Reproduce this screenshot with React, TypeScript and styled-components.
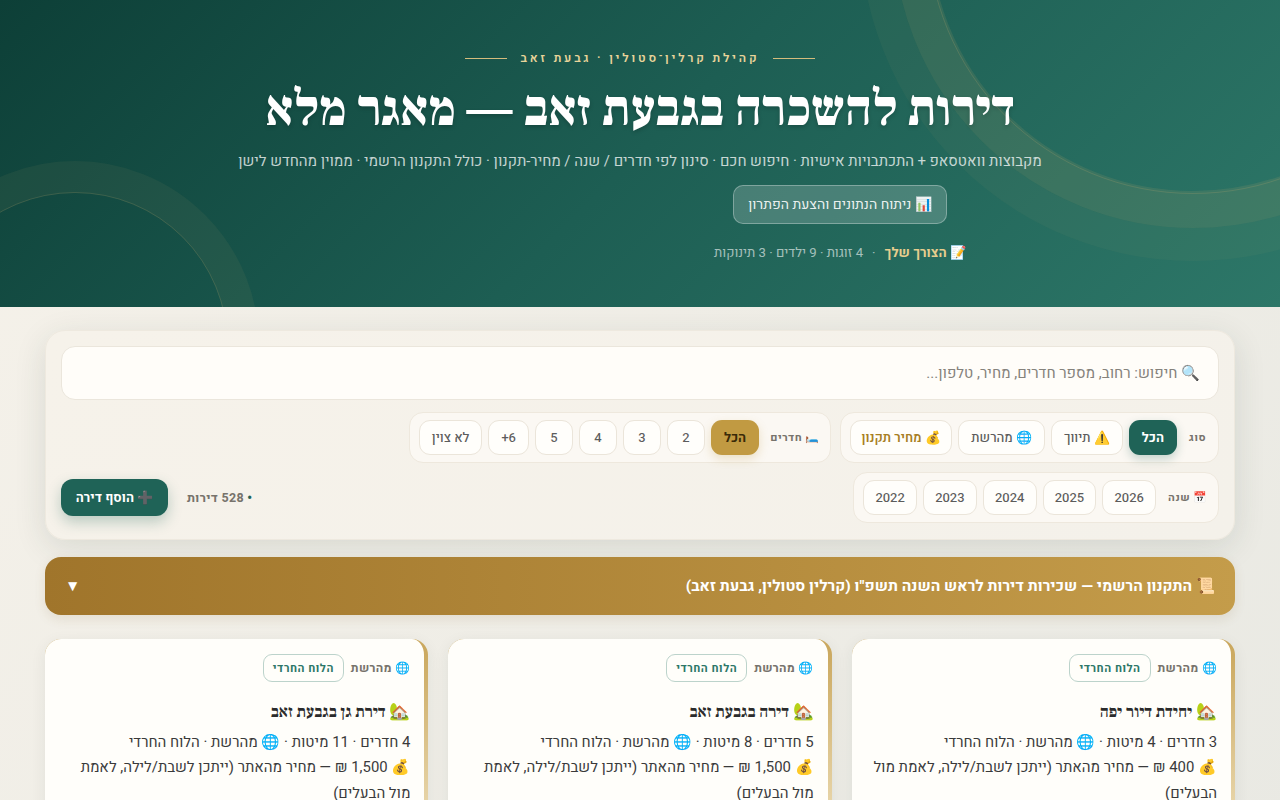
import React from "react";
import styled, { createGlobalStyle } from "styled-components";

const GlobalStyle = createGlobalStyle`
  * { box-sizing: border-box; }
  html, body { margin: 0; padding: 0; }
  body {
    direction: rtl;
    font-family: Heebo, Roboto, "Open Sans", sans-serif;
    background: linear-gradient(135deg, #f6f2ea 0%, #e9e9e3 100%);
    color: #3a3a3a;
    overflow-x: hidden;
  }
`;

const Hero = styled.header`
  position: relative;
  overflow: hidden;
  height: 307px;
  padding-top: 50px;
  text-align: center;
  background: linear-gradient(135deg, #0d3f37 0%, #1d5e53 50%, #2d7768 100%);
`;

const Ring = styled.div<{ $size: number; $top: number; $left: number; $width: number; $alpha: number }>`
  position: absolute;
  width: ${(p) => p.$size}px;
  height: ${(p) => p.$size}px;
  top: ${(p) => p.$top}px;
  left: ${(p) => p.$left}px;
  border-radius: 50%;
  border: ${(p) => p.$width}px solid rgba(200, 170, 110, ${(p) => p.$alpha});
`;

const HeroInner = styled.div`
  position: relative;
`;

const Eyebrow = styled.div`
  display: flex;
  align-items: center;
  justify-content: center;
  gap: 14px;
  height: 16px;
  font-size: 12px;
  font-weight: 600;
  letter-spacing: 2.8px;
  color: #e8d49a;
  &::before,
  &::after {
    content: "";
    width: 42px;
    height: 1px;
    background: #d4bc7c;
  }
`;

const Title = styled.h1`
  margin: 15px 0 0;
  font-family: "Frank Ruhl Libre", "Liberation Serif", serif;
  font-size: 50px;
  line-height: 58px;
  font-weight: 900;
  color: #fff;
  text-shadow: 0 2px 4px rgba(0, 0, 0, 0.2);
`;

const Subtitle = styled.p`
  margin: 12px 0 0;
  font-size: 14.9px;
  line-height: 20px;
  color: rgba(255, 255, 255, 0.75);
`;

/* the button and the note sit to the left of the page centre in the reference */
const HeroActions = styled.div`
  padding-left: 400px;
`;

const HeroButton = styled.button`
  display: block;
  margin: 14px auto 0;
  height: 39px;
  padding: 0 14px;
  border-radius: 10px;
  border: 1px solid rgba(255, 255, 255, 0.3);
  background: rgba(255, 255, 255, 0.18);
  color: rgba(255, 255, 255, 0.9);
  font-family: inherit;
  font-size: 14px;
`;

const Need = styled.div`
  display: flex;
  align-items: center;
  justify-content: center;
  gap: 9px;
  margin-top: 19px;
  font-size: 13.2px;
  line-height: 20px;
  color: rgba(255, 255, 255, 0.6);
`;

const NeedLabel = styled.strong`
  color: #e6cd8e;
`;

const Main = styled.main`
  padding: 23px 45px 40px;
`;

const Panel = styled.section`
  padding: 15px 15px 16px;
  display: flex;
  flex-direction: column;
  gap: 9px;
  border-radius: 20px;
  border: 1px solid #eee9df;
  background: linear-gradient(135deg, #f6f2ea, #f4f1ea);
  box-shadow: 0 8px 32px rgba(31, 60, 50, 0.12);
`;

const SearchBox = styled.div`
  height: 54px;
  flex: none;
  margin-bottom: 3px;
  display: flex;
  align-items: center;
  padding: 0 19px 0 16px;
  border-radius: 14px;
  border: 1px solid #ebe6dc;
  background: #fffdf9;
`;

const SearchInput = styled.input`
  width: 100%;
  border: 0;
  outline: 0;
  padding: 0;
  margin-right: -1px;
  background: transparent;
  font-family: inherit;
  font-size: 15px;
  direction: rtl;
  &::placeholder {
    color: #85827c;
    opacity: 1;
  }
`;

const FilterRow = styled.div`
  display: flex;
  align-items: center;
  gap: 9px;
`;

const Group = styled.div<{ $padRight?: number }>`
  height: 51px;
  display: flex;
  align-items: center;
  gap: 6px;
  padding: 0 ${(p) => p.$padRight ?? 12}px 0 9px;
  border-radius: 14px;
  border: 1px solid #eee8dd;
  background: #fbf8f3;
`;

const GroupLabel = styled.span<{ $gap?: number }>`
  margin-left: ${(p) => p.$gap ?? 6}px;
  font-size: 11px;
  font-weight: 700;
  letter-spacing: 0.5px;
  color: #77736c;
`;

const Chip = styled.button<{ $active?: "green" | "gold"; $gold?: boolean }>`
  height: 35px;
  min-width: 38px;
  padding: 0 ${(p) => (p.$gold ? 10.5 : 12)}px;
  border-radius: 11px;
  font-family: inherit;
  font-size: 13px;
  font-weight: ${(p) => (p.$active ? 700 : p.$gold ? 600 : 500)};
  border: 1px solid ${(p) => (p.$active ? "transparent" : "#ebe5da")};
  background: ${(p) =>
    p.$active === "green" ? "#1f6357" : p.$active === "gold" ? "#c19a42" : "#fffefb"};
  color: ${(p) =>
    p.$active === "green" ? "#fff" : p.$active === "gold" ? "#3a2a08" : p.$gold ? "#a87f24" : "#5c5c5c"};
  box-shadow: ${(p) =>
    p.$active === "green"
      ? "0 4px 10px rgba(31, 99, 87, 0.25)"
      : p.$active === "gold"
      ? "0 4px 10px rgba(193, 154, 66, 0.25)"
      : "none"};
`;

const YearChip = styled(Chip)`
  padding: 0 11.2px;
`;

const Count = styled.span`
  margin-right: auto;
  margin-left: 10px;
  font-size: 12.5px;
  font-weight: 700;
  color: #77736c;
  letter-spacing: 0.3px;
  b {
    color: #1f6357;
  }
`;

const AddButton = styled.button`
  height: 37px;
  width: 107px;
  padding: 0;
  border: 0;
  border-radius: 12px;
  background: #1f6357;
  color: #fff;
  font-family: inherit;
  font-size: 13px;
  font-weight: 700;
  box-shadow: 0 6px 14px rgba(31, 99, 87, 0.28);
`;

const Accordion = styled.div`
  height: 58px;
  margin-top: 17px;
  display: flex;
  align-items: center;
  justify-content: space-between;
  padding: 0 20px;
  border-radius: 16px;
  background: linear-gradient(270deg, #c49c4a 0%, #a0752b 100%);
  box-shadow: 0 4px 12px rgba(120, 90, 30, 0.12);
  color: #fff;
  font-size: 15.45px;
  font-weight: 700;
`;

const CardGrid = styled.div`
  margin-top: 24px;
  display: grid;
  grid-template-columns: repeat(3, 1fr);
  gap: 20px;
`;

const Card = styled.article`
  padding: 15px 14px 16px 16px;
  border-radius: 16px;
  border-right: 4px solid transparent;
  background: linear-gradient(#fffefa, #fffefa) padding-box,
    linear-gradient(180deg, #c9a65b, #ead9b0) border-box;
  box-shadow: 0 4px 16px rgba(30, 60, 50, 0.07);
`;

const CardMeta = styled.div`
  display: flex;
  align-items: center;
  gap: 7px;
  height: 28px;
`;

const Source = styled.span`
  font-size: 12px;
  font-weight: 700;
  letter-spacing: 0.3px;
  color: #77736c;
`;

const Badge = styled.span`
  display: inline-flex;
  align-items: center;
  height: 28px;
  padding: 0 9px;
  border-radius: 9px;
  border: 1px solid #bcd3cb;
  font-size: 11.2px;
  font-weight: 700;
  letter-spacing: 0.5px;
  color: #2d7768;
`;

const CardTitle = styled.h3`
  margin: 17px 0 4.5px;
  font-family: "Frank Ruhl Libre", "Liberation Serif", serif;
  font-size: 16.8px;
  line-height: 26px;
  font-weight: 700;
  color: #2b2b2b;
`;

const CardLine = styled.p`
  margin: 0;
  font-size: 14.9px;
  line-height: 25.5px;
  color: #3a3a3a;
`;

const typeChips = [
  { label: "הכל", active: "green" as const },
  { label: "⚠️ תיווך" },
  { label: "🌐 מהרשת" },
  { label: "💰 מחיר תקנון", gold: true },
];

const roomChips = ["2", "3", "4", "5", "6+", "לא צוין"];
const yearChips = ["2026", "2025", "2024", "2023", "2022"];

const cards = [
  { title: "יחידת דיור יפה", rooms: "3 חדרים · 4 מיטות", price: "400" },
  { title: "דירה בגבעת זאב", rooms: "5 חדרים · 8 מיטות", price: "1,500" },
  { title: "דירת גן בגבעת זאב", rooms: "4 חדרים · 11 מיטות", price: "1,500" },
];

export default function App() {
  return (
    <div lang="he" dir="rtl">
      <GlobalStyle />
      <Hero>
        <Ring $size={666} $top={-405} $left={860} $width={33} $alpha={0.05} />
        <Ring $size={600} $top={-372} $left={893} $width={37} $alpha={0.13} />
        <Ring $size={532} $top={-338} $left={927} $width={1} $alpha={0.2} />
        <Ring $size={368} $top={161} $left={-109} $width={32} $alpha={0.07} />
        <Ring $size={306} $top={192} $left={-78} $width={1} $alpha={0.18} />
        <HeroInner>
          <Eyebrow>קהילת קרלין־סטולין · גבעת זאב</Eyebrow>
          <Title>דירות להשכרה בגבעת זאב — מאגר מלא</Title>
          <Subtitle>
            מקבוצות וואטסאפ + התכתבויות אישיות · חיפוש חכם · סינון לפי חדרים / שנה / מחיר-תקנון · כולל התקנון הרשמי · ממוין מהחדש לישן
          </Subtitle>
          <HeroActions>
            <HeroButton>📊 ניתוח הנתונים והצעת הפתרון</HeroButton>
            <Need>
              <NeedLabel>📝 הצורך שלך</NeedLabel>
              <span>·</span>
              <span>4 זוגות · 9 ילדים · 3 תינוקות</span>
            </Need>
          </HeroActions>
        </HeroInner>
      </Hero>
      <Main>
        <Panel>
          <SearchBox>
            <SearchInput placeholder="🔍 חיפוש: רחוב, מספר חדרים, מחיר, טלפון..." />
          </SearchBox>
          <FilterRow>
            <Group>
              <GroupLabel>סוג</GroupLabel>
              {typeChips.map((c) => (
                <Chip key={c.label} $active={c.active} $gold={c.gold}>
                  {c.label}
                </Chip>
              ))}
            </Group>
            <Group $padRight={10}>
              <GroupLabel $gap={5}>🛏️ חדרים</GroupLabel>
              <Chip $active="gold">הכל</Chip>
              {roomChips.map((c) => (
                <Chip key={c}>{c}</Chip>
              ))}
            </Group>
          </FilterRow>
          <FilterRow>
            <Group $padRight={10}>
              <GroupLabel>📅 שנה</GroupLabel>
              {yearChips.map((c) => (
                <YearChip key={c}>{c}</YearChip>
              ))}
            </Group>
            <Count>
              <b>•</b> 528 דירות
            </Count>
            <AddButton>➕ הוסף דירה</AddButton>
          </FilterRow>
        </Panel>
        <Accordion>
          <span>📜 התקנון הרשמי — שכירות דירות לראש השנה תשפ"ו (קרלין סטולין, גבעת זאב)</span>
          <span>▼</span>
        </Accordion>
        <CardGrid>
          {cards.map((c) => (
            <Card key={c.title}>
              <CardMeta>
                <Source>🌐 מהרשת</Source>
                <Badge>הלוח החרדי</Badge>
              </CardMeta>
              <CardTitle>🏡 {c.title}</CardTitle>
              <CardLine>{c.rooms} · 🌐 מהרשת · הלוח החרדי</CardLine>
              <CardLine>💰 {c.price} ₪ — מחיר מהאתר (ייתכן לשבת/לילה, לאמת מול הבעלים)</CardLine>
            </Card>
          ))}
        </CardGrid>
      </Main>
    </div>
  );
}
